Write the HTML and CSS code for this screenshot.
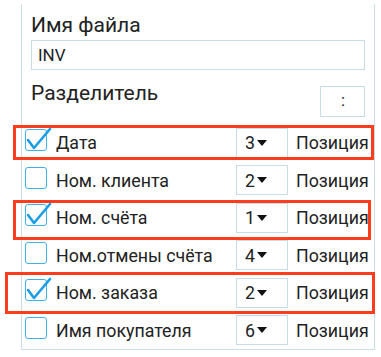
FILE: index.html
```html
<!DOCTYPE html>
<html lang="ru">
<head>
    <meta charset="UTF-8">
    <meta name="viewport" content="width=device-width, initial-scale=1.0">
    <title>Экспорт счетов</title>
    <link rel="stylesheet" href="styles.css">
</head>
<body>

    <div class="panel">
        <label class="field-label" for="filename">Имя файла</label>
        <input type="text" id="filename" class="text-input" value="INV">

        <div class="sep-row">
            <span class="sep-label">Разделитель</span>
            <span class="sep-box">:</span>
        </div>

        <div class="fields">
            <div class="row">
                <span class="check checked">
                    <svg viewBox="0 0 26 24"><path d="M2 12 L8 20 L24 1"/></svg>
                </span>
                <span class="name">Дата</span>
                <span class="select">3<i class="caret"></i></span>
                <span class="pos">Позиция</span>
                <span class="mark mark-a"></span>
            </div>
            <div class="row">
                <span class="check"></span>
                <span class="name">Ном. клиента</span>
                <span class="select">2<i class="caret"></i></span>
                <span class="pos">Позиция</span>
            </div>
            <div class="row">
                <span class="check checked">
                    <svg viewBox="0 0 26 24"><path d="M2 12 L8 20 L24 1"/></svg>
                </span>
                <span class="name">Ном. счёта</span>
                <span class="select">1<i class="caret"></i></span>
                <span class="pos">Позиция</span>
                <span class="mark mark-b"></span>
            </div>
            <div class="row">
                <span class="check"></span>
                <span class="name">Ном.отмены счёта</span>
                <span class="select">4<i class="caret"></i></span>
                <span class="pos">Позиция</span>
            </div>
            <div class="row">
                <span class="check checked">
                    <svg viewBox="0 0 26 24"><path d="M2 12 L8 20 L24 1"/></svg>
                </span>
                <span class="name">Ном. заказа</span>
                <span class="select">2<i class="caret"></i></span>
                <span class="pos">Позиция</span>
                <span class="mark mark-c"></span>
            </div>
            <div class="row">
                <span class="check"></span>
                <span class="name">Имя покупателя</span>
                <span class="select">6<i class="caret"></i></span>
                <span class="pos">Позиция</span>
            </div>
        </div>
    </div>

</body>
</html>
```

FILE: styles.css
```css
body {
    margin: 0;
    background-color: #ffffff;
    font-family: Roboto, 'Noto Sans', sans-serif;
    color: #222222;
}

.panel {
    box-sizing: border-box;
    width: 354px;
    margin: 4px 0 0 21px;
    padding: 0 9px 0 9px;
    border: 1px solid #cbdde5;
    border-top: none;
}

.field-label {
    display: block;
    padding-top: 9px;
    font-size: 21px;
    line-height: 24px;
}

.text-input {
    box-sizing: border-box;
    display: block;
    width: 334px;
    height: 30px;
    margin-top: 3px;
    padding: 0 6px;
    border: 1px solid #c6dce6;
    font-family: inherit;
    font-size: 17px;
    color: #222222;
    outline: none;
}

.sep-row {
    display: flex;
    justify-content: space-between;
    align-items: flex-start;
    margin-top: 11px;
}

.sep-label {
    font-size: 21px;
    line-height: 24px;
}

.sep-box {
    box-sizing: border-box;
    width: 45px;
    height: 31px;
    margin-top: 5px;
    border: 1px solid #c6dce6;
    text-align: center;
    font-size: 17px;
    line-height: 27px;
    padding-left: 1px;
}

.fields {
    margin: 7px -6px 0 -6px;
}

.row {
    position: relative;
    display: flex;
    align-items: center;
    height: 37.5px;
    font-size: 17.8px;
}

.check {
    position: relative;
    box-sizing: border-box;
    flex: none;
    width: 22px;
    height: 22px;
    margin-bottom: 5px;
    border: 1.5px solid #3fb0ec;
    border-radius: 3px;
}

.check svg {
    position: absolute;
    left: 0;
    top: -2px;
    width: 26px;
    height: 24px;
    overflow: visible;
}

.check svg path {
    fill: none;
    stroke: #1b9de6;
    stroke-width: 2.6;
    stroke-linecap: round;
    stroke-linejoin: round;
}

.name {
    flex: 1;
    margin-left: 9px;
}

.select {
    box-sizing: border-box;
    display: flex;
    align-items: center;
    width: 52px;
    height: 30px;
    padding-left: 8px;
    border: 1px solid #c6dce6;
}

.caret {
    width: 0;
    height: 0;
    margin-left: 2px;
    border-left: 5px solid transparent;
    border-right: 5px solid transparent;
    border-top: 6px solid #111111;
}

.pos {
    margin-left: 8px;
    width: 75px;
    white-space: nowrap;
}

.mark {
    position: absolute;
    top: 1px;
    bottom: 2px;
    border: 3px solid #ff3c1c;
    pointer-events: none;
}

.mark-a {
    left: -12px;
    right: -3px;
}

.mark-b {
    top: 1px;
    bottom: -3px;
    left: -12px;
    right: 0;
}

.mark-c {
    top: -2px;
    bottom: -2px;
    left: -20px;
    right: -4px;
}
```
